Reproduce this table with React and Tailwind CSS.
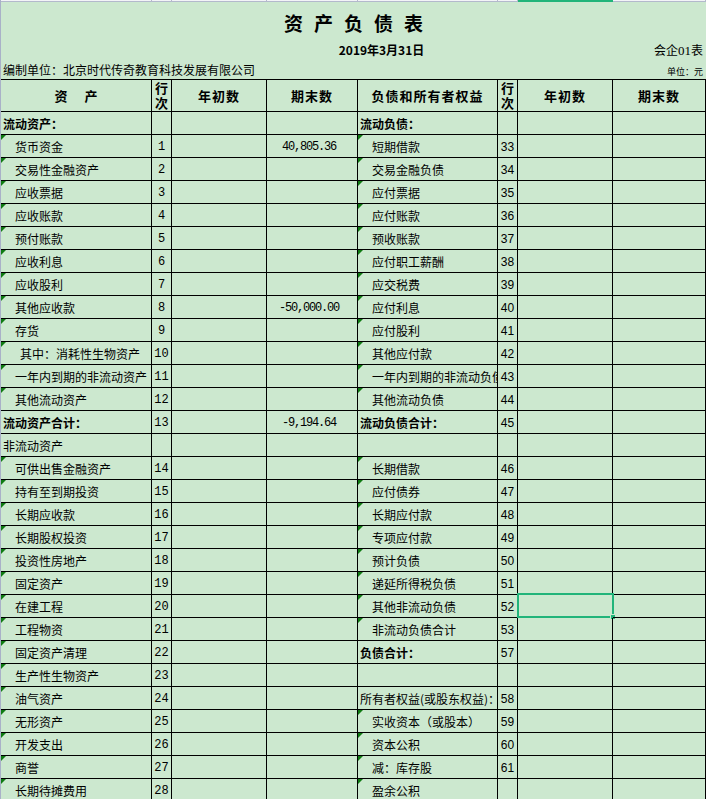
import React from "react";

const CJK = { fontFamily: '"Noto Sans CJK SC", "Liberation Sans", sans-serif' };

const left = [
  ["流动资产：", "b", "", ""],
  ["货币资金", "s", "1", "40,805.36"],
  ["交易性金融资产", "s", "2", ""],
  ["应收票据", "s", "3", ""],
  ["应收账款", "s", "4", ""],
  ["预付账款", "s", "5", ""],
  ["应收利息", "s", "6", ""],
  ["应收股利", "s", "7", ""],
  ["其他应收款", "s", "8", "-50,000.00"],
  ["存货", "s", "9", ""],
  ["其中：消耗性生物资产", "i", "10", ""],
  ["一年内到期的非流动资产", "s", "11", ""],
  ["其他流动资产", "s", "12", ""],
  ["流动资产合计：", "b", "13", "-9,194.64"],
  ["非流动资产", "p", "", ""],
  ["可供出售金融资产", "s", "14", ""],
  ["持有至到期投资", "s", "15", ""],
  ["长期应收款", "s", "16", ""],
  ["长期股权投资", "s", "17", ""],
  ["投资性房地产", "s", "18", ""],
  ["固定资产", "s", "19", ""],
  ["在建工程", "s", "20", ""],
  ["工程物资", "s", "21", ""],
  ["固定资产清理", "s", "22", ""],
  ["生产性生物资产", "s", "23", ""],
  ["油气资产", "s", "24", ""],
  ["无形资产", "s", "25", ""],
  ["开发支出", "s", "26", ""],
  ["商誉", "s", "27", ""],
  ["长期待摊费用", "s", "28", ""],
];

const right = [
  ["流动负债：", "b", ""],
  ["短期借款", "s", "33"],
  ["交易金融负债", "s", "34"],
  ["应付票据", "s", "35"],
  ["应付账款", "s", "36"],
  ["预收账款", "s", "37"],
  ["应付职工薪酬", "s", "38"],
  ["应交税费", "s", "39"],
  ["应付利息", "s", "40"],
  ["应付股利", "s", "41"],
  ["其他应付款", "s", "42"],
  ["一年内到期的非流动负债", "s", "43"],
  ["其他流动负债", "s", "44"],
  ["流动负债合计：", "b", "45"],
  ["", "p", ""],
  ["长期借款", "s", "46"],
  ["应付债券", "s", "47"],
  ["长期应付款", "s", "48"],
  ["专项应付款", "s", "49"],
  ["预计负债", "s", "50"],
  ["递延所得税负债", "s", "51"],
  ["其他非流动负债", "s", "52"],
  ["非流动负债合计", "s", "53"],
  ["负债合计：", "b", "57"],
  ["", "p", ""],
  ["所有者权益(或股东权益)：", "p", "58"],
  ["实收资本（或股本）", "s", "59"],
  ["资本公积", "s", "60"],
  ["减：库存股", "s", "61"],
  ["盈余公积", "s", ""],
];

const COLS = "grid grid-cols-[151px_20px_95px_91px_140px_20px_95px_93px]";

function Tri() {
  return (
    <svg className="absolute left-0 top-0" width="5" height="5" viewBox="0 0 5 5">
      <polygon points="0,0 5,0 0,5" fill="#0f7a12" />
    </svg>
  );
}

function LabelCell({ text, kind }) {
  const pad = kind === "s" ? "pl-[14px]" : kind === "i" ? "pl-[19px]" : "pl-[2px]";
  const weight = kind === "b" ? "font-bold" : "font-normal";
  return (
    <div className={`relative flex items-center overflow-hidden whitespace-nowrap border-r border-b border-black text-[12px] leading-none text-black ${pad} ${weight}`} style={CJK}>
      {(kind === "s" || kind === "i") && <Tri />}
      <span className="pt-[1px]">{text}</span>
    </div>
  );
}

function Cell({ children, className = "" }) {
  return <div className={`relative flex items-center border-r border-b border-black ${className}`}>{children}</div>;
}

export default function App() {
  return (
    <div className="min-h-[799px] w-full bg-white">
      <div className="w-[706px] border-l border-[#a9b1c8] bg-[#cce8cf]">
        {/* top strip */}
        <div className={`${COLS} h-[2px] bg-[#f3f4f7]`}>
          {[0, 1, 2, 3, 4, 5, 6, 7].map((i) => (
            <div key={i} className={i === 6 ? "bg-[#21b47a]" : "border-r border-b border-[#b3b9cc]"} />
          ))}
        </div>

        {/* header area */}
        <div className="flex h-[40px] items-center justify-center gap-[11px] text-[19px] font-bold leading-none text-black" style={CJK}>
          <span>资</span>
          <span>产</span>
          <span>负</span>
          <span>债</span>
          <span>表</span>
        </div>
        <div className="relative flex h-[16px] items-center justify-center">
          <span className="pl-[56px] text-[12px] font-bold leading-none text-black" style={CJK}>
            2019年3月31日
          </span>
          <span className="absolute right-[3px] top-0 flex h-[16px] items-center text-[12px] leading-none text-black" style={CJK}>
            会企<span style={{ fontFamily: '"Liberation Serif", serif' }} className="text-[13px]">01</span>表
          </span>
        </div>
        <div className="flex h-[21px] items-center justify-between pl-[2px] pr-[3px] pt-[3px]">
          <span className="text-[12px] leading-none text-black" style={CJK}>
            编制单位：北京时代传奇教育科技发展有限公司
          </span>
          <span className="pt-[2px] text-[9px] leading-none text-black" style={CJK}>
            单位：元
          </span>
        </div>

        {/* table */}
        <div className="border-t border-black">
          <div className={`${COLS} h-[32px] text-[13px] font-bold leading-[14px] text-black`} style={CJK}>
            <Cell className="justify-center gap-[17px]">
              <span>资</span>
              <span>产</span>
            </Cell>
            <Cell className="flex-col justify-center gap-[1px]">
              <span>行</span>
              <span>次</span>
            </Cell>
            <Cell className="justify-center tracking-[1px]">年初数</Cell>
            <Cell className="justify-center tracking-[1px]">期末数</Cell>
            <Cell className="justify-center tracking-[1px]">负债和所有者权益</Cell>
            <Cell className="flex-col justify-center gap-[1px]">
              <span>行</span>
              <span>次</span>
            </Cell>
            <Cell className="justify-center tracking-[1px]">年初数</Cell>
            <Cell className="justify-center tracking-[1px]">期末数</Cell>
          </div>

          {left.map((l, i) => {
            const r = right[i];
            return (
              <div key={i} className={`${COLS} h-[23px]`}>
                <LabelCell text={l[0]} kind={l[1]} />
                <Cell className="justify-center pt-[1px] text-[12px] leading-none text-black">
                  <span style={{ fontFamily: '"Liberation Mono", monospace' }}>{l[2]}</span>
                </Cell>
                <Cell />
                <Cell className="justify-center pr-[6px] pt-[1px] text-[12px] leading-none tracking-[-1.2px] text-black">
                  <span style={{ fontFamily: '"Liberation Mono", monospace' }}>{l[3]}</span>
                </Cell>
                <LabelCell text={r[0]} kind={r[1]} />
                <Cell className="justify-center pt-[1px] text-[12px] leading-none text-black">
                  <span style={{ fontFamily: '"Liberation Sans", sans-serif' }}>{r[2]}</span>
                </Cell>
                <Cell>
                  {i === 21 && (
                    <div className="absolute -left-[1px] -top-[2px] h-[25px] w-[97px] border-2 border-[#21b47a]">
                      <div className="absolute -bottom-[4px] -right-[4px] h-[6px] w-[6px] border border-[#cce8cf] bg-[#21b47a]" />
                    </div>
                  )}
                </Cell>
                <Cell />
              </div>
            );
          })}
        </div>
      </div>
    </div>
  );
}
